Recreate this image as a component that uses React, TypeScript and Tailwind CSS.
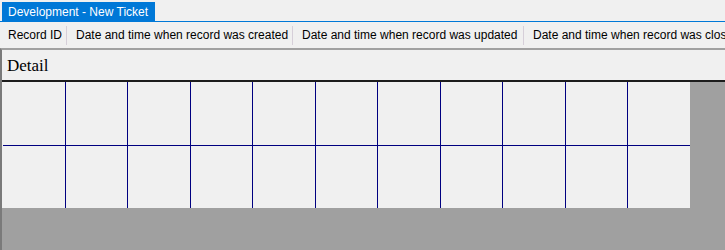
import React from "react";

const headers = [
  { label: "Record ID", width: "w-[66px]" },
  { label: "Date and time when record was created", width: "w-[225px]" },
  { label: "Date and time when record was updated", width: "w-[230px]" },
  { label: "Date and time when record was closed", width: "w-[240px]" },
];

export default function App() {
  const cells = [...Array(22).keys()];
  return (
    <div className="flex h-[250px] w-[725px] flex-col overflow-hidden bg-[#f0f0f0] font-['Liberation_Sans',sans-serif] text-[12px] text-black">
      {/* tab strip */}
      <div className="flex h-[22px] shrink-0 items-end border-b border-[#0078d7] pl-[2px]">
        <div className="flex h-[19px] items-center bg-[#0078d7] pl-[6px] pr-[7px] leading-none text-white">
          Development - New Ticket
        </div>
      </div>

      {/* column headers */}
      <div className="flex h-[26px] shrink-0 items-center overflow-hidden whitespace-nowrap">
        {headers.map((h, i) => (
          <React.Fragment key={i}>
            {i > 0 && <div className="h-[19px] w-px shrink-0 bg-[#d6cfd9]" />}
            <div
              className={`${h.width} shrink-0 leading-none ${i === 0 ? "pl-[8px]" : "pl-[9px]"}`}
            >
              {h.label}
            </div>
          </React.Fragment>
        ))}
      </div>

      {/* form body */}
      <div className="flex flex-1 flex-col border-l-2 border-t-2 border-l-[#7a7a7a] border-t-[#a0a0a0] bg-[#a0a0a0]">
        <div className="flex h-[32px] shrink-0 items-center border-b-2 border-[#1c1c1c] bg-[#f0f0f0] pl-[5px] font-['Liberation_Serif',serif] text-[17px] leading-none">
          Detail
        </div>
        <div className="grid h-[126px] w-[688px] grid-cols-11 grid-rows-2 gap-px border-l border-[#f0f0f0] bg-[#000080]">
          {cells.map((i) => (
            <div key={i} className="bg-[#f0f0f0]" />
          ))}
        </div>
      </div>
    </div>
  );
}
